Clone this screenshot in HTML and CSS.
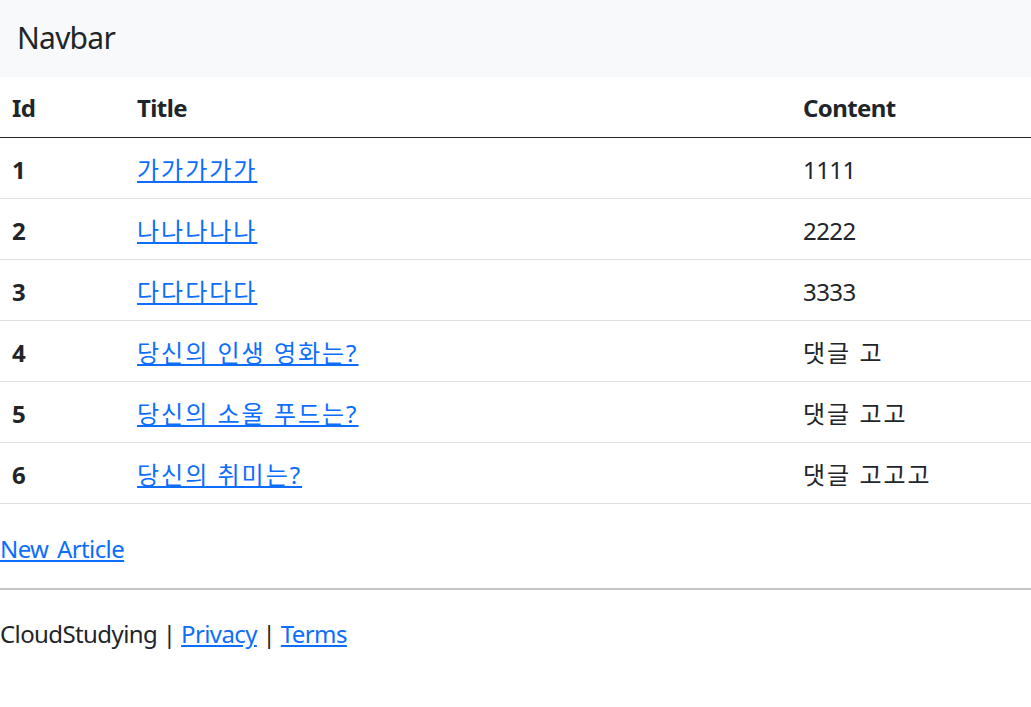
FILE: index.html
```html
<!DOCTYPE html>
<html lang="ko">
<head>
<meta charset="utf-8">
<title>Articles</title>
<link rel="stylesheet" href="styles.css">
</head>
<body>
<nav class="navbar">
  <a class="brand" href="#">Navbar</a>
</nav>
<table class="table">
  <thead>
    <tr><th class="c-id">Id</th><th class="c-title">Title</th><th class="c-content">Content</th></tr>
  </thead>
  <tbody>
    <tr><th>1</th><td class="ko"><a href="#">가가가가가</a></td><td>1111</td></tr>
    <tr><th>2</th><td class="ko"><a href="#">나나나나나</a></td><td>2222</td></tr>
    <tr><th>3</th><td class="ko"><a href="#">다다다다다</a></td><td>3333</td></tr>
    <tr><th>4</th><td class="ko"><a href="#">당신의 인생 영화는?</a></td><td class="ko">댓글 고</td></tr>
    <tr><th>5</th><td class="ko"><a href="#">당신의 소울 푸드는?</a></td><td class="ko">댓글 고고</td></tr>
    <tr><th>6</th><td class="ko"><a href="#">당신의 취미는?</a></td><td class="ko">댓글 고고고</td></tr>
  </tbody>
</table>
<a class="new-link" href="#">New Article</a>
<hr class="divider">
<footer class="footer">CloudStudying | <a href="#">Privacy</a> | <a href="#">Terms</a></footer>
</body>
</html>
```
FILE: styles.css
```css
html, body {
  margin: 0;
  padding: 0;
}
body {
  font-family: "Noto Sans", "Noto Sans CJK KR", sans-serif;
  font-size: 24px;
  line-height: 36px;
  letter-spacing: -0.6px;
  color: #212529;
  background: #fff;
}
a {
  color: #0d6efd;
  text-decoration: underline;
}
.navbar {
  background: #f8f9fa;
  height: 77px;
  display: flex;
  align-items: center;
  padding: 0 17px;
  box-sizing: border-box;
}
.brand {
  font-size: 30px;
  line-height: 45px;
  letter-spacing: -0.75px;
  color: #212529;
  text-decoration: none;
  margin-top: -2px;
}
.table {
  width: 100%;
  border-collapse: collapse;
  margin-bottom: 24px;
}
.table th, .table td {
  padding: 14px 12px 10px;
  text-align: left;
  vertical-align: top;
  border-bottom: 1px solid #dee2e6;
}
.table th {
  font-weight: 700;
}
.table thead th {
  border-bottom: 1px solid #212529;
  padding-top: 13px;
  padding-bottom: 11px;
}
.table .ko {
  letter-spacing: 2px;
}
.c-id { width: 101px; }
.c-title { width: 642px; }
.new-link {
  display: block;
  width: max-content;
  margin-top: 27px;
  word-spacing: 3px;
}
.divider {
  margin: 21px 0 0;
  border: 0;
  border-top: 2px solid #c4c4c4;
}
.footer {
  padding-top: 26px;
}
```
